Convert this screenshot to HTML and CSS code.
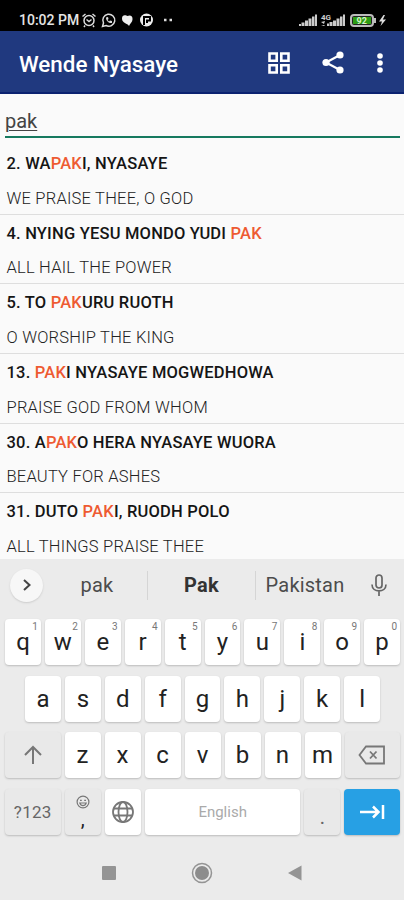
FILE: index.html
```html
<!DOCTYPE html>
<html lang="en">
<head>
    <meta charset="UTF-8">
    <meta name="viewport" content="width=device-width, initial-scale=1.0">
    <title>Wende Nyasaye</title>
    <link rel="stylesheet" href="styles.css">
</head>
<body>
    <div class="status-bar">
        <span class="clock">10:02 PM</span>
        <svg class="status-left" width="94" height="16" viewBox="0 0 94 16" fill="none" stroke="#ddd" stroke-width="1.5">
            <circle cx="8" cy="8.5" r="5"/>
            <path d="M1.5 4.5 4.5 2M14.500 4.500 11.500 2M5.500 7.500 8 9.500 10.500 7.500M4 13.500 3 15M12 13.500 13 15"/>
            <path d="M21.500 14.500 22.500 11A6 6 0 1 1 25 13.500Z"/>
            <path d="M25 5.500C25 9 28 11.500 31 11L31 9 29 8.500 28 9.500 26.500 8 27.500 7 27 5Z" fill="#ddd" stroke="none"/>
            <path d="M41 6.500C41 2 45 3 46.500 4 49 2.500 52 4 51.500 7.500 51.500 10 49 11.500 48 14 46.500 11 41 11.500 41 6.500Z" fill="#eee" stroke="none"/>
            <circle cx="65.500" cy="8" r="6.500" fill="#eee" stroke="none"/>
            <path d="M63 13V5H69V8.500H66V11" stroke="#000" stroke-width="2"/>
            <path d="M83 8h2.500M88.500 8h2.500" stroke-width="2.500"/>
        </svg>
        <svg class="status-right" width="88" height="16" viewBox="0 0 88 16">
            <g fill="#ccc">
                <path d="M0 12h2v2H0zM2.500 10.500h3V14h-3zM6 8.500h3V14H6zM9.500 6.500h3V14h-3zM13 4.500h2.500V14H13zM16 2.500h2V14h-2z"/>
                <path d="M28 11.500h2V14h-2zM30.500 10h3v4h-3zM34 8.500h3V14h-3zM37.500 6.500h3V14h-3zM41 4.500h2.500V14H41zM44 2.500h2V14h-2z"/>
                <path d="m22 10 4-1-1 3zM22 14l3-1 1 1z"/>
            </g>
            <text x="22" y="8" class="network">4G</text>
            <rect x="52" y="3" width="22" height="11" rx="3" fill="#222" stroke="#bbb" stroke-width="2"/>
            <rect x="54" y="5" width="18" height="7" fill="#2d9c14"/>
            <rect x="75" y="6" width="2" height="5" fill="#bbb"/>
            <text x="57.500" y="11.800" class="battery">92</text>
            <path d="M84.500 3 80 9.500h3L81.500 14 87 7.500h-3.200L86 3z" fill="#ddd"/>
        </svg>
    </div>
    <div class="app-bar">
        <h1>Wende Nyasaye</h1>
        <svg class="grid-icon" width="22" height="22" viewBox="0 0 22 22" fill="none" stroke="#fff" stroke-width="2.600">
            <path d="M1.500 1.500h7.200v7.200H1.500zM13.300 1.500h7.200v7.200h-7.200zM1.500 13.300h7.200v7.200H1.500zM13.300 13.300h7.200v7.200h-7.200z"/>
        </svg>
        <svg class="share-icon" width="22" height="23" viewBox="0 0 22 23" fill="#fff">
            <path d="M18 4 4 11.500 18 19" fill="none" stroke="#fff" stroke-width="2.200"/>
            <circle cx="18" cy="4" r="3.600"/><circle cx="4" cy="11.500" r="3.600"/><circle cx="18" cy="19" r="3.600"/>
        </svg>
        <svg width="6" height="20" viewBox="0 0 6 20" fill="#fff">
            <circle cx="3" cy="3" r="2.800"/><circle cx="3" cy="10" r="2.800"/><circle cx="3" cy="17" r="2.800"/>
        </svg>
    </div>
    <div class="search">
        <div class="search-field"><span>pak</span></div>
    </div>
    <div class="songs">
        <div class="song">
            <h2>2. WA<b>PAK</b>I, NYASAYE</h2>
            <p>WE PRAISE THEE, O GOD</p>
        </div>
        <div class="song">
            <h2>4. NYING YESU MONDO YUDI <b>PAK</b></h2>
            <p>ALL HAIL THE POWER</p>
        </div>
        <div class="song">
            <h2>5. TO <b>PAK</b>URU RUOTH</h2>
            <p>O WORSHIP THE KING</p>
        </div>
        <div class="song">
            <h2>13. <b>PAK</b>I NYASAYE MOGWEDHOWA</h2>
            <p>PRAISE GOD FROM WHOM</p>
        </div>
        <div class="song">
            <h2>30. A<b>PAK</b>O HERA NYASAYE WUORA</h2>
            <p>BEAUTY FOR ASHES</p>
        </div>
        <div class="song">
            <h2>31. DUTO <b>PAK</b>I, RUODH POLO</h2>
            <p>ALL THINGS PRAISE THEE</p>
        </div>
    </div>
    <div class="keyboard">
        <div class="suggestions">
            <div class="expand">
                <svg width="8" height="12" viewBox="0 0 8 12" fill="none" stroke="#444" stroke-width="2"><path d="M1 1 6.500 6 1 11"/></svg>
            </div>
            <span class="suggestion">pak</span>
            <span class="suggestion best">Pak</span>
            <span class="suggestion">Pakistan</span>
            <svg class="mic" width="16" height="23" viewBox="0 0 16 23" fill="none" stroke="#666" stroke-width="1.700">
                <rect x="5" y="1" width="6" height="13" rx="3"/>
                <path d="M1 10.500C1 19 15 19 15 10.500M8 17v5"/>
            </svg>
        </div>
        <div class="keys">
            <div class="key">q<sup>1</sup></div>
            <div class="key">w<sup>2</sup></div>
            <div class="key">e<sup>3</sup></div>
            <div class="key">r<sup>4</sup></div>
            <div class="key">t<sup>5</sup></div>
            <div class="key">y<sup>6</sup></div>
            <div class="key">u<sup>7</sup></div>
            <div class="key">i<sup>8</sup></div>
            <div class="key">o<sup>9</sup></div>
            <div class="key">p<sup>0</sup></div>
        </div>
        <div class="keys middle">
            <div class="key">a</div>
            <div class="key">s</div>
            <div class="key">d</div>
            <div class="key">f</div>
            <div class="key">g</div>
            <div class="key">h</div>
            <div class="key">j</div>
            <div class="key">k</div>
            <div class="key">l</div>
        </div>
        <div class="keys">
            <div class="key wide gray">
                <svg width="20" height="20" viewBox="0 0 20 20" fill="none" stroke="#777" stroke-width="2"><path d="M10 19V2M2 10 10 2 18 10"/></svg>
            </div>
            <div class="key">z</div>
            <div class="key">x</div>
            <div class="key">c</div>
            <div class="key">v</div>
            <div class="key">b</div>
            <div class="key">n</div>
            <div class="key">m</div>
            <div class="key wide gray">
                <svg width="28" height="20" viewBox="0 0 28 20" fill="none" stroke="#777" stroke-width="1.800"><path d="M8 1.500H26V18.500H8L1.500 10ZM12 6.500 18.500 13.500M18.500 6.500 12 13.500"/></svg>
            </div>
        </div>
        <div class="keys">
            <div class="key wide gray symbols">?123</div>
            <div class="key gray comma">
                <svg width="14" height="14" viewBox="0 0 14 14" fill="none" stroke="#777" stroke-width="1.200"><circle cx="7" cy="7" r="5.900"/><path d="M4 5.300h1.800M8.200 5.300H10M3.800 8C5 11.500 9 11.500 10.200 8Z"/></svg>
                <span>,</span>
            </div>
            <div class="key">
                <svg width="24" height="24" viewBox="0 0 24 24" fill="none" stroke="#777" stroke-width="1.800"><circle cx="12" cy="12" r="10"/><ellipse cx="12" cy="12" rx="4.500" ry="10"/><path d="M3 8.500h18M3 15.500h18"/></svg>
            </div>
            <div class="key space">English</div>
            <div class="key gray period">.</div>
            <div class="key wide enter">
                <svg width="25" height="16" viewBox="0 0 25 16" fill="none" stroke="#fff" stroke-width="2.500"><path d="M0 8H18M13 2.500 18.500 8 13 13.500M23 1V15"/></svg>
            </div>
        </div>
        <div class="nav">
            <svg width="14" height="14" viewBox="0 0 14 14"><rect width="14" height="14" rx="1" fill="#949494"/></svg>
            <svg width="22" height="22" viewBox="0 0 22 22"><circle cx="11" cy="11" r="9.500" fill="none" stroke="#949494" stroke-width="1.500"/><circle cx="11" cy="11" r="7" fill="#8c8c8c"/></svg>
            <svg width="14" height="16" viewBox="0 0 14 16"><path d="M0 8 13.500 0.500V15.500Z" fill="#949494"/></svg>
        </div>
    </div>
</body>
</html>
```

FILE: styles.css
```css
* {
    box-sizing: border-box;
}
body {
    margin: 0;
    height: 900px;
    display: flex;
    flex-direction: column;
    overflow: hidden;
    font-family: Roboto, sans-serif;
    background-color: #fafafa;
    color: #151515;
}
.status-bar {
    flex-shrink: 0;
    display: flex;
    align-items: center;
    height: 31px;
    padding: 8px 17px 0 19px;
    background-color: black;
    color: #e4e4e4;
}
.clock {
    width: 60px;
    font-size: 14px;
    font-weight: 500;
    white-space: nowrap;
}
.status-left {
    margin-left: 2px;
}
.status-right {
    margin-left: auto;
}
.network {
    font-size: 8px;
    font-weight: bold;
    fill: #ccc;
}
.battery {
    font-size: 9px;
    font-weight: bold;
    fill: #d8f5c8;
}
.app-bar {
    flex-shrink: 0;
    display: flex;
    align-items: center;
    height: 63px;
    padding: 2px 21px 0 19px;
    background-color: #20397f;
    border-bottom: 2px solid #0b2270;
    color: white;
}
.app-bar h1 {
    margin: 3px auto 0 0;
    font-size: 22.4px;
    font-weight: 500;
}
.grid-icon {
    margin-right: 32px;
}
.share-icon {
    margin-right: 33px;
}
.search {
    flex-shrink: 0;
    height: 51px;
    padding: 11px 4px 7px 5px;
}
.search-field {
    height: 33px;
    border-bottom: 2px solid #16795f;
    font-size: 20px;
    line-height: 32px;
    color: #444;
}
.search-field span {
    text-decoration: underline;
    text-decoration-thickness: 1px;
    text-underline-offset: 2px;
}
.songs {
    flex-shrink: 0;
    height: 414px;
    overflow: hidden;
}
.song {
    height: 69.7px;
    padding: 8px 6.5px 0;
    border-bottom: 1px solid #dedede;
}
.song h2 {
    margin: 0;
    font-size: 16.5px;
    font-weight: 500;
    line-height: 21px;
    letter-spacing: 0.2px;
}
.song b {
    font-weight: 500;
    color: #ee5a32;
}
.song p {
    margin: 14.5px 0 0;
    font-size: 16.5px;
    font-weight: 300;
    line-height: 20px;
    letter-spacing: 0.22px;
    color: #222;
}
.keyboard {
    flex: 1;
    display: flex;
    flex-direction: column;
    background-color: #ebebeb;
}
.suggestions {
    display: flex;
    align-items: center;
    height: 52px;
    margin-bottom: 8px;
    padding: 0 17px 0 10px;
}
.expand {
    display: flex;
    align-items: center;
    justify-content: center;
    width: 33px;
    height: 33px;
    margin-right: 4px;
    border-radius: 50%;
    background-color: #f7f7f7;
    box-shadow: 0 1px 2px #ccc;
}
.suggestion {
    width: 101px;
    height: 29px;
    border-right: 1px solid #d5d5d5;
    font-size: 20px;
    line-height: 29px;
    text-align: center;
    color: #4c4c4c;
    letter-spacing: 0.2px;
}
.suggestion.best {
    width: 108px;
    font-weight: bold;
    color: #333;
}
.suggestion:nth-child(4) {
    width: 98px;
    border: none;
}
.mic {
    margin-left: auto;
}
.keys {
    display: flex;
    gap: 4px;
    height: 46px;
    margin-bottom: 10.7px;
    padding: 0 4px 0 5px;
}
.keys.middle {
    padding: 0 24px 0 25px;
}
.key {
    position: relative;
    flex: 1;
    display: flex;
    align-items: center;
    justify-content: center;
    border-radius: 4px;
    background-color: white;
    box-shadow: 0 1px 2px #bbb;
    font-size: 24px;
    color: #222;
}
.key sup {
    position: absolute;
    top: 2px;
    right: 3px;
    font-size: 10px;
    line-height: 12px;
    color: #777;
}
.key.wide {
    flex: 0 0 55.5px;
}
.key.gray {
    background-color: #e9e9e9;
}
.key.symbols {
    font-size: 17px;
    letter-spacing: 0.3px;
    color: #666;
}
.key.comma {
    flex-direction: column;
}
.key.comma span {
    font-size: 20px;
    line-height: 20px;
}
.key.space {
    flex: 0 0 155px;
    font-size: 15px;
    color: #aaa;
}
.key.period {
    padding-top: 10px;
    font-size: 20px;
    color: #666;
}
.key.enter {
    background-color: #27a0e4;
}
.nav {
    display: flex;
    align-items: center;
    justify-content: center;
    gap: 75px;
    height: 54px;
}
```
